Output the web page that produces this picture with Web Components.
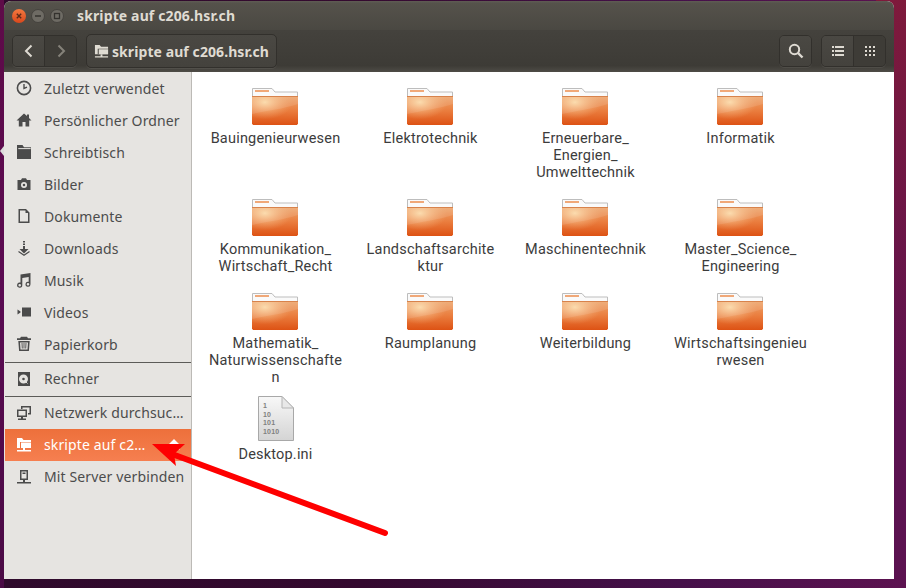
<!DOCTYPE html>
<html>
<head>
<meta charset="utf-8">
<title>skripte auf c206.hsr.ch</title>
<style>
html, body { margin: 0; height: 100%; overflow: hidden; }
body { font-family: "Noto Sans", "Open Sans", sans-serif; }
</style>
</head>
<body>
<desk-top>
	<file-window>
		<title-bar slot="title">skripte auf c206.hsr.ch</title-bar>
		<tool-bar slot="tools">skripte auf c206.hsr.ch</tool-bar>
		<side-bar slot="side">
			<side-item icon="recent">Zuletzt verwendet</side-item>
			<side-item icon="home">Persönlicher Ordner</side-item>
			<side-item icon="desktop">Schreibtisch</side-item>
			<side-item icon="camera">Bilder</side-item>
			<side-item icon="doc">Dokumente</side-item>
			<side-item icon="download">Downloads</side-item>
			<side-item icon="music">Musik</side-item>
			<side-item icon="video">Videos</side-item>
			<side-item icon="trash">Papierkorb</side-item>
			<side-sep></side-sep>
			<side-item icon="disk" lift>Rechner</side-item>
			<side-sep class="tight"></side-sep>
			<side-item icon="network" lift>Netzwerk durchsuc…</side-item>
			<side-item icon="share" lift active eject>skripte auf c2…</side-item>
			<side-item icon="server" lift>Mit Server verbinden</side-item>
		</side-bar>
		<file-grid slot="main">
			<file-item>Bauingenieurwesen</file-item>
			<file-item>Elektrotechnik</file-item>
			<file-item>Erneuerbare_<br>Energien_<br>Umwelttechnik</file-item>
			<file-item>Informatik</file-item>
			<file-item>Kommunikation_<br>Wirtschaft_Recht</file-item>
			<file-item>Landschaftsarchite<br>ktur</file-item>
			<file-item>Maschinentechnik</file-item>
			<file-item>Master_Science_<br>Engineering</file-item>
			<file-item>Mathematik_<br>Naturwissenschafte<br>n</file-item>
			<file-item>Raumplanung</file-item>
			<file-item>Weiterbildung</file-item>
			<file-item>Wirtschaftsingenieu<br>rwesen</file-item>
			<file-item type="ini">Desktop.ini</file-item>
		</file-grid>
	</file-window>
	<red-arrow></red-arrow>
</desk-top>

<script>
const uiFont = '"Noto Sans", "Open Sans", sans-serif';

class DeskTop extends HTMLElement {
	constructor() {
		super();
		this.attachShadow({ mode: 'open' });
		this.shadowRoot.innerHTML = `
		<style>
			:host {
				display: block;
				position: relative;
				width: 906px;
				height: 588px;
				box-sizing: border-box;
				padding: 1px 12px 9px 4px;
				overflow: hidden;
				background:
					linear-gradient(to bottom, rgba(128,26,58,.95) 0%, rgba(128,26,58,0) 70%) right top / 30px 100% no-repeat,
					linear-gradient(to right, #2f0a2c 0%, #34092f 40%, #45104a 75%, #5c1250 100%);
			}
			.edge {
				position: absolute;
				left: 0; top: 0;
				width: 4px; height: 100%;
				background: linear-gradient(to bottom, #5e0b48, #5a0a52 50%, #4a0a45);
			}
			.edge::after {
				content: '';
				position: absolute;
				left: 0; top: 146px;
				border-right: 4px solid #dcdcdc;
				border-top: 5px solid transparent;
				border-bottom: 5px solid transparent;
			}
		</style>
		<div class="edge"></div>
		<slot></slot>`;
	}
}

class FileWindow extends HTMLElement {
	constructor() {
		super();
		this.attachShadow({ mode: 'open' });
		this.shadowRoot.innerHTML = `
		<style>
			:host {
				display: grid;
				position: relative;
				width: 890px;
				height: 578px;
				grid-template-columns: 188px 1fr;
				grid-template-rows: 29px 42px 1fr;
				border-radius: 7px 7px 0 0;
				overflow: hidden;
				background: #fff;
			}
			.title { grid-column: 1 / 3; display: block; }
			.tools { grid-column: 1 / 3; display: block; }
		</style>
		<div class="title"><slot name="title"></slot></div>
		<div class="tools"><slot name="tools"></slot></div>
		<slot name="side"></slot>
		<slot name="main"></slot>`;
	}
}

class TitleBar extends HTMLElement {
	constructor() {
		super();
		this.attachShadow({ mode: 'open' });
		this.shadowRoot.innerHTML = `
		<style>
			:host {
				display: flex;
				align-items: center;
				height: 29px;
				box-sizing: border-box;
				padding-left: 8px;
				background: linear-gradient(to bottom, #5f5c54, #55524b 8%, #4a4842);
				color: #dfdbd2;
				font: bold 14px ${uiFont};
				letter-spacing: .13px;
			}
			.btns { display: flex; gap: 5px; margin-right: 13px; }
			svg { display: block; }
		</style>
		<div class="btns">
			<svg width="14" height="14" viewBox="0 0 14 14">
				<defs><linearGradient id="c" x1="0" y1="0" x2="0" y2="1"><stop offset="0" stop-color="#f4793f"/><stop offset="1" stop-color="#d9481c"/></linearGradient></defs>
				<circle cx="7" cy="7" r="7" fill="url(#c)"/>
				<path d="M4.800 4.800l4.400 4.400M9.200 4.800l-4.400 4.400" stroke="#5a2a18" stroke-width="1.400" fill="none"/>
			</svg>
			<svg width="14" height="14" viewBox="0 0 14 14">
				<circle cx="7" cy="7" r="6.500" fill="#6e6b64" stroke="#45433e"/>
				<path d="M4 7h6" stroke="#34322e" stroke-width="1.400"/>
			</svg>
			<svg width="14" height="14" viewBox="0 0 14 14">
				<circle cx="7" cy="7" r="6.500" fill="#6e6b64" stroke="#45433e"/>
				<rect x="4.500" y="4.500" width="5" height="5" fill="none" stroke="#34322e" stroke-width="1.300"/>
			</svg>
		</div>
		<slot></slot>`;
	}
}

class ToolBar extends HTMLElement {
	constructor() {
		super();
		this.attachShadow({ mode: 'open' });
		this.shadowRoot.innerHTML = `
		<style>
			:host {
				display: flex;
				align-items: center;
				height: 42px;
				box-sizing: border-box;
				padding: 0 8px;
				background: linear-gradient(to bottom, #44423d, #3d3b36 85%, #4e4c46);
				color: #dfdbd2;
				font: bold 14px ${uiFont};
				letter-spacing: .08px;
				white-space: nowrap;
			}
			.group { display: flex; height: 32px; border: 1px solid #32302c; border-radius: 5px; box-sizing: border-box; overflow: hidden; box-shadow: 0 1px 0 rgba(255,255,255,.07); }
			.btn { display: flex; align-items: center; justify-content: center; background: linear-gradient(to bottom, #4a4843, #44423d); }
			.btn + .btn { border-left: 1px solid #32302c; }
			.btn.dim { background: #3e3c37; }
			.nav { margin-right: 9px; }
			.nav .btn { width: 31px; }
			.path { height: 34px; padding: 0 0 0 7px; gap: 3px; align-items: center; background: linear-gradient(to bottom, #4a4843, #44423d); margin-right: auto; width: 191px; }
			.search { width: 33px; margin-right: 9px; }
			.search .btn { width: 100%; }
			.view { width: 65px; }
			.view .btn { flex: 1; }
			svg { display: block; flex: none; }
		</style>
		<div class="group nav">
			<div class="btn">
				<svg width="12" height="14" viewBox="0 0 12 14"><path d="M8.500 1.500L3 7l5.500 5.500" fill="none" stroke="#dedad2" stroke-width="2"/></svg>
			</div>
			<div class="btn dim">
				<svg width="12" height="14" viewBox="0 0 12 14"><path d="M3.500 1.500L9 7l-5.500 5.500" fill="none" stroke="#85827a" stroke-width="2"/></svg>
			</div>
		</div>
		<div class="group path">
			<svg width="15" height="15" viewBox="0 0 16 16" fill="#dfdbd2">
				<path d="M1 1h5l1.500 2H15v8H9v2h6v1.500H1V13h6v-2H1z"/>
				<path d="M4 5h11v6H4z" fill="#3f3d38"/>
				<path d="M5 5.500h10V11H5z"/>
			</svg>
			<slot></slot>
		</div>
		<div class="group search">
			<div class="btn">
				<svg width="16" height="16" viewBox="0 0 16 16"><circle cx="6.500" cy="6.500" r="4.700" fill="none" stroke="#dedad2" stroke-width="2"/><path d="M10 10l4.500 4.500" stroke="#dedad2" stroke-width="2.400"/></svg>
			</div>
		</div>
		<div class="group view">
			<div class="btn">
				<svg width="12" height="12" viewBox="0 0 12 12" fill="#dedad2"><path d="M0 1h2v2H0zM3 1h9v2H3zM0 5h2v2H0zM3 5h9v2H3zM0 9h2v2H0zM3 9h9v2H3z"/></svg>
			</div>
			<div class="btn dim">
				<svg width="12" height="12" viewBox="0 0 12 12" fill="#dedad2"><path d="M1 1h2v2H1zM5 1h2v2H5zM9 1h2v2H9zM1 5h2v2H1zM5 5h2v2H5zM9 5h2v2H9zM1 9h2v2H1zM5 9h2v2H5zM9 9h2v2H9z"/></svg>
			</div>
		</div>`;
	}
}

class SideBar extends HTMLElement {
	constructor() {
		super();
		this.attachShadow({ mode: 'open' });
		this.shadowRoot.innerHTML = `
		<style>
			:host {
				display: block;
				background: #e6e4e1;
				border-right: 1px solid #bcbab6;
				padding-left: 1px;
				font: 14px ${uiFont};
				letter-spacing: .13px;
				color: #4c4c4c;
			}
		</style>
		<slot></slot>`;
	}
}

const sideIcons = {
	recent: '<circle cx="8" cy="8" r="6.600" fill="none" stroke="#4b4b4b" stroke-width="1.600"/><path d="M8 4v4.400l3-1.200" fill="none" stroke="#4b4b4b" stroke-width="1.400"/>',
	home: '<path fill-rule="evenodd" d="M8 1.500L0.500 8.500h2.300V14.500h10.400V8.500h2.300L13 6V2.500h-2v1.600zM6.500 10h3v4.500h-3z"/>',
	desktop: '<path d="M1 1h5.500l1.500 2.200h7V15H1z"/><path d="M2.300 4.600h12.400" stroke="#e6e4e1" stroke-width="1" fill="none"/>',
	camera: '<path fill-rule="evenodd" d="M1.500 4H5l1-1.700h4L11 4h3.500v10h-13zM8 6a3 3 0 100 6 3 3 0 000-6zm0 1.700a1.300 1.300 0 110 2.600 1.300 1.300 0 010-2.600z"/>',
	doc: '<path fill-rule="evenodd" d="M2.500 1H10l3.500 3.500V15h-11zM4 2.500v11h8V5H9.500V2.500z"/>',
	download: '<path d="M7 1h2v1.500H7zM7 3.500h2V5H7zM7 6h2v3h3.500L8 13.500 3.500 9H7z"/><path d="M2.500 11.500L8 15.200l5.500-3.700" fill="none" stroke="#4b4b4b" stroke-width="1.200"/>',
	music: '<path fill-rule="evenodd" d="M4.500 2.500L14.500 1v11.200a2.500 2.500 0 11-1.800-2.400V5L6.300 6v7a2.600 2.600 0 11-1.800-2.400zM3.700 12a1.300 1.300 0 100 2.600 1.300 1.300 0 000-2.600zM12 11a1.300 1.300 0 100 2.600 1.300 1.300 0 000-2.600z"/>',
	video: '<path d="M6 3.500h9v9H6zM1.500 5.500L4.500 7.500v1L1.500 10.500z"/>',
	trash: '<path fill-rule="evenodd" d="M5 .8h6L12 2.300h3V4H1V2.300h3zM2.300 5h11.400l-.8 10H3.100zM4 6.500l.5 7h7l.5-7z"/><path d="M6 7l.3 5.500M8 7v5.500M10 7l-.3 5.500" stroke="#4b4b4b" stroke-width=".9" fill="none"/>',
	disk: '<path fill-rule="evenodd" d="M2 1h12v14H2zM7.500 3.500a4.500 4.500 0 100 9 4.500 4.500 0 000-9zm0 3.200a1.300 1.300 0 110 2.600 1.300 1.300 0 010-2.600z"/><path d="M9 10l2.500 2.500" stroke="#e6e4e1" fill="none"/>',
	network: '<path fill-rule="evenodd" d="M5 1h10v8.500h-3V8h1.500V2.500h-7V4H5zM1 4.500h10V12H7v1.500h3V15H2v-1.500h3V12H1zM2.500 6v4.500h7V6z"/>',
	share: '<path d="M1 1h5l1.500 2H15v8H9v2h6v1.500H1V13h6v-2H1z"/><path d="M4 5h11v6H4z" fill="#f0743f"/><path d="M5 5.500h10V11H5z"/>',
	server: '<path fill-rule="evenodd" d="M4 1h8v10H9v2h6v1.500H1V13h6v-2H4zM5.500 2.500v7h5v-7zM6.500 3.500h3V5h-3z"/>',
};

class SideItem extends HTMLElement {
	constructor() {
		super();
		this.attachShadow({ mode: 'open' });
	}

	connectedCallback() {
		const active = this.hasAttribute('active');
		const icon = sideIcons[this.getAttribute('icon')] || '';
		const eject = this.hasAttribute('eject')
			? '<svg class="eject" width="14" height="12" viewBox="0 0 14 12" fill="#fff"><path d="M7 0l6 6H1zM1 8h12v2.500H1z"/></svg>'
			: '';
		this.shadowRoot.innerHTML = `
		<style>
			:host {
				display: flex;
				align-items: center;
				height: 32px;
				padding-left: 11px;
				gap: 12px;
				white-space: nowrap;
				${active ? 'background: linear-gradient(to bottom, #ed703b, #f67f50); color: #fff;' : ''}
			}
			:host([lift]) .t { margin-top: -2px; }
			svg.ic { display: block; flex: none; fill: ${active ? '#fff' : '#4b4b4b'}; }
			.eject { margin-left: auto; margin-right: 10px; }
		</style>
		<svg class="ic" width="16" height="16" viewBox="0 0 16 16">${icon}</svg>
		<div class="t"><slot></slot></div>
		${eject}`;
	}
}

class SideSep extends HTMLElement {
	constructor() {
		super();
		this.attachShadow({ mode: 'open' });
		this.shadowRoot.innerHTML = `
		<style>
			:host { display: block; padding-top: 2px; }
			:host(.tight) { padding-top: 1px; }
			div { height: 1px; background: #5c5b58; }
		</style>
		<div></div>`;
	}
}

class FileGrid extends HTMLElement {
	constructor() {
		super();
		this.attachShadow({ mode: 'open' });
		this.shadowRoot.innerHTML = `
		<style>
			:host {
				display: grid;
				grid-template-columns: repeat(4, 155px);
				align-items: start;
				align-content: start;
				row-gap: 8px;
				padding: 6px 0 0 6px;
				background: #fff;
				font: 14.5px Roboto, "Noto Sans", sans-serif;
				letter-spacing: .2px;
				color: #3c3c3c;
			}
		</style>
		<slot></slot>`;
	}
}

class FileItem extends HTMLElement {
	constructor() {
		super();
		this.attachShadow({ mode: 'open' });
	}

	connectedCallback() {
		const ini = this.getAttribute('type') === 'ini';
		const art = ini ? `
			<svg width="48" height="48" viewBox="0 0 48 48">
				<defs><linearGradient id="p" x1="0" y1="0" x2="0" y2="1"><stop offset="0" stop-color="#f8f8f8"/><stop offset="1" stop-color="#d4d4d4"/></linearGradient></defs>
				<path d="M6.500 2.500H30L41.500 14V46.500H6.500z" fill="url(#p)" stroke="#a8a8a8"/>
				<path d="M30 2.500V14H41.500z" fill="#e8e8e8" stroke="#b4b4b4"/>
				<g font-family="Liberation Sans, sans-serif" font-size="7" font-weight="bold" fill="#808080">
					<text x="11" y="14">1</text><text x="11" y="23">10</text><text x="11" y="31">101</text><text x="11" y="40">1010</text>
				</g>
			</svg>` : `
			<svg width="48" height="48" viewBox="1 0 48 48">
				<defs>
					<linearGradient id="b" x1="0" y1="0" x2="0" y2="1"><stop offset="0" stop-color="#eda56c"/><stop offset=".5" stop-color="#ea7d3e"/><stop offset="1" stop-color="#dd5214"/></linearGradient>
					<radialGradient id="h" cx=".28" cy=".2" r=".6"><stop offset="0" stop-color="#fcdcaa" stop-opacity=".95"/><stop offset="1" stop-color="#f4b07a" stop-opacity="0"/></radialGradient>
				</defs>
				<path d="M1.500 20V10.500H21L24 14H46.500V20z" fill="#fafafa" stroke="#bdbdbd"/>
				<rect x="4" y="12" width="14" height="2" fill="#f0a878"/>
				<path d="M1 18.500H47V45.500L46 47H2L1 45.500z" fill="url(#b)"/>
				<path d="M1 18.500H47V45.500L46 47H2L1 45.500z" fill="url(#h)"/>
				<path d="M1 36C14 33 32 31 47 26V19H1z" fill="#fff" opacity=".1"/>
				<path d="M1 18.500H47" stroke="#d8834c" fill="none"/>
			</svg>`;
		this.shadowRoot.innerHTML = `
		<style>
			:host {
				display: flex;
				flex-direction: column;
				align-items: center;
				text-align: center;
				line-height: 17px;
				white-space: nowrap;
			}
			svg { display: block; margin-bottom: 4px; }
		</style>
		${art}
		<div class="t"><slot></slot></div>`;
	}
}

class RedArrow extends HTMLElement {
	constructor() {
		super();
		this.attachShadow({ mode: 'open' });
		this.shadowRoot.innerHTML = `
		<style>
			:host { position: absolute; left: 0; top: 0; width: 906px; height: 588px; pointer-events: none; }
			svg { display: block; }
		</style>
		<svg width="906" height="588" viewBox="0 0 906 588">
			<path d="M385 533L172 454" stroke="#fe0000" stroke-width="6" stroke-linecap="round" fill="none"/>
			<path d="M152 444L185 444L174 454L176 466z" fill="#fe0000"/>
		</svg>`;
	}
}

customElements.define('desk-top', DeskTop);
customElements.define('file-window', FileWindow);
customElements.define('title-bar', TitleBar);
customElements.define('tool-bar', ToolBar);
customElements.define('side-bar', SideBar);
customElements.define('side-item', SideItem);
customElements.define('side-sep', SideSep);
customElements.define('file-grid', FileGrid);
customElements.define('file-item', FileItem);
customElements.define('red-arrow', RedArrow);
</script>
</body>
</html>
